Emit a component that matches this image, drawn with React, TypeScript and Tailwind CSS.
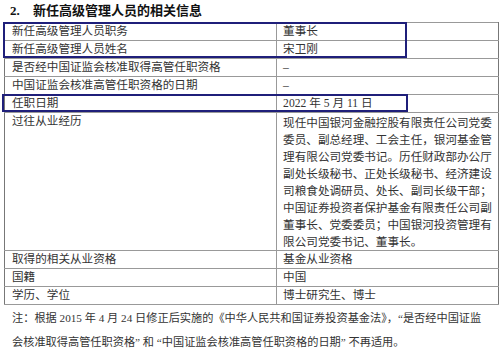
const FONT = {
  fontFamily: '"Liberation Serif", "Noto Sans CJK SC", serif',
};

type Row = { label: string; value: string[]; tall?: boolean };

const rows: Row[] = [
  { label: "新任高级管理人员职务", value: ["董事长"] },
  { label: "新任高级管理人员姓名", value: ["宋卫刚"] },
  { label: "是否经中国证监会核准取得高管任职资格", value: ["–"] },
  { label: "中国证监会核准高管任职资格的日期", value: ["–"] },
  { label: "任职日期", value: ["2022 年 5 月 11 日"] },
  {
    label: "过往从业经历",
    tall: true,
    value: [
      "现任中国银河金融控股有限责任公司党委",
      "委员、副总经理、工会主任，银河基金管",
      "理有限公司党委书记。历任财政部办公厅",
      "副处长级秘书、正处长级秘书、经济建设",
      "司粮食处调研员、处长、副司长级干部；",
      "中国证券投资者保护基金有限责任公司副",
      "董事长、党委委员；中国银河投资管理有",
      "限公司党委书记、董事长。",
    ],
  },
  { label: "取得的相关从业资格", value: ["基金从业资格"] },
  { label: "国籍", value: ["中国"] },
  { label: "学历、学位", value: ["博士研究生、博士"] },
];

export default function App() {
  return (
    <div
      className="relative h-[351px] w-[500px] overflow-hidden bg-white text-[#333]"
      style={FONT}
    >
      <div className="flex h-[22px] items-center pl-[10px] text-[13px] font-bold text-[#111]">
        <span className="w-[23px]">2.</span>
        <span>新任高级管理人员的相关信息</span>
      </div>

      <div className="relative ml-[4px] w-[495px]">
        <table className="w-full border-collapse text-[11.6px] leading-[15px]">
          <colgroup>
            <col className="w-[273px]" />
            <col className="w-[222px]" />
          </colgroup>
          <tbody>
            {rows.map((row) => (
              <tr
                key={row.label}
                className={row.tall ? "h-[136px]" : "h-[18px]"}
              >
                <td className="border border-[#999] border-l-[#777] px-[7px] align-top pt-[1px] whitespace-nowrap">
                  {row.label}
                </td>
                <td className="border border-[#999] border-r-[#777] pl-[6px] align-top pt-[1px] whitespace-nowrap">
                  {row.value.map((line) => (
                    <div key={line} className={row.tall ? "h-[15px] mt-[2px]" : ""}>
                      {line}
                    </div>
                  ))}
                </td>
              </tr>
            ))}
          </tbody>
        </table>

        {/* highlight boxes */}
        <div className="pointer-events-none absolute left-[-1px] top-[0px] h-[36px] w-[404px] border-2 border-[#1f1f7a]" />
        <div className="pointer-events-none absolute left-[-2px] top-[72px] h-[18px] w-[406px] border-2 border-[#1f1f7a]" />
      </div>

      <div className="mt-[1px] pl-[12px] text-[11.2px] leading-[24px] whitespace-nowrap">
        <div>
          注：根据 2015 年 4 月 24 日修正后实施的《中华人民共和国证券投资基金法》，“是否经中国证监
        </div>
        <div>
          会核准取得高管任职资格” 和 “中国证监会核准高管任职资格的日期” 不再适用。
        </div>
      </div>
    </div>
  );
}
